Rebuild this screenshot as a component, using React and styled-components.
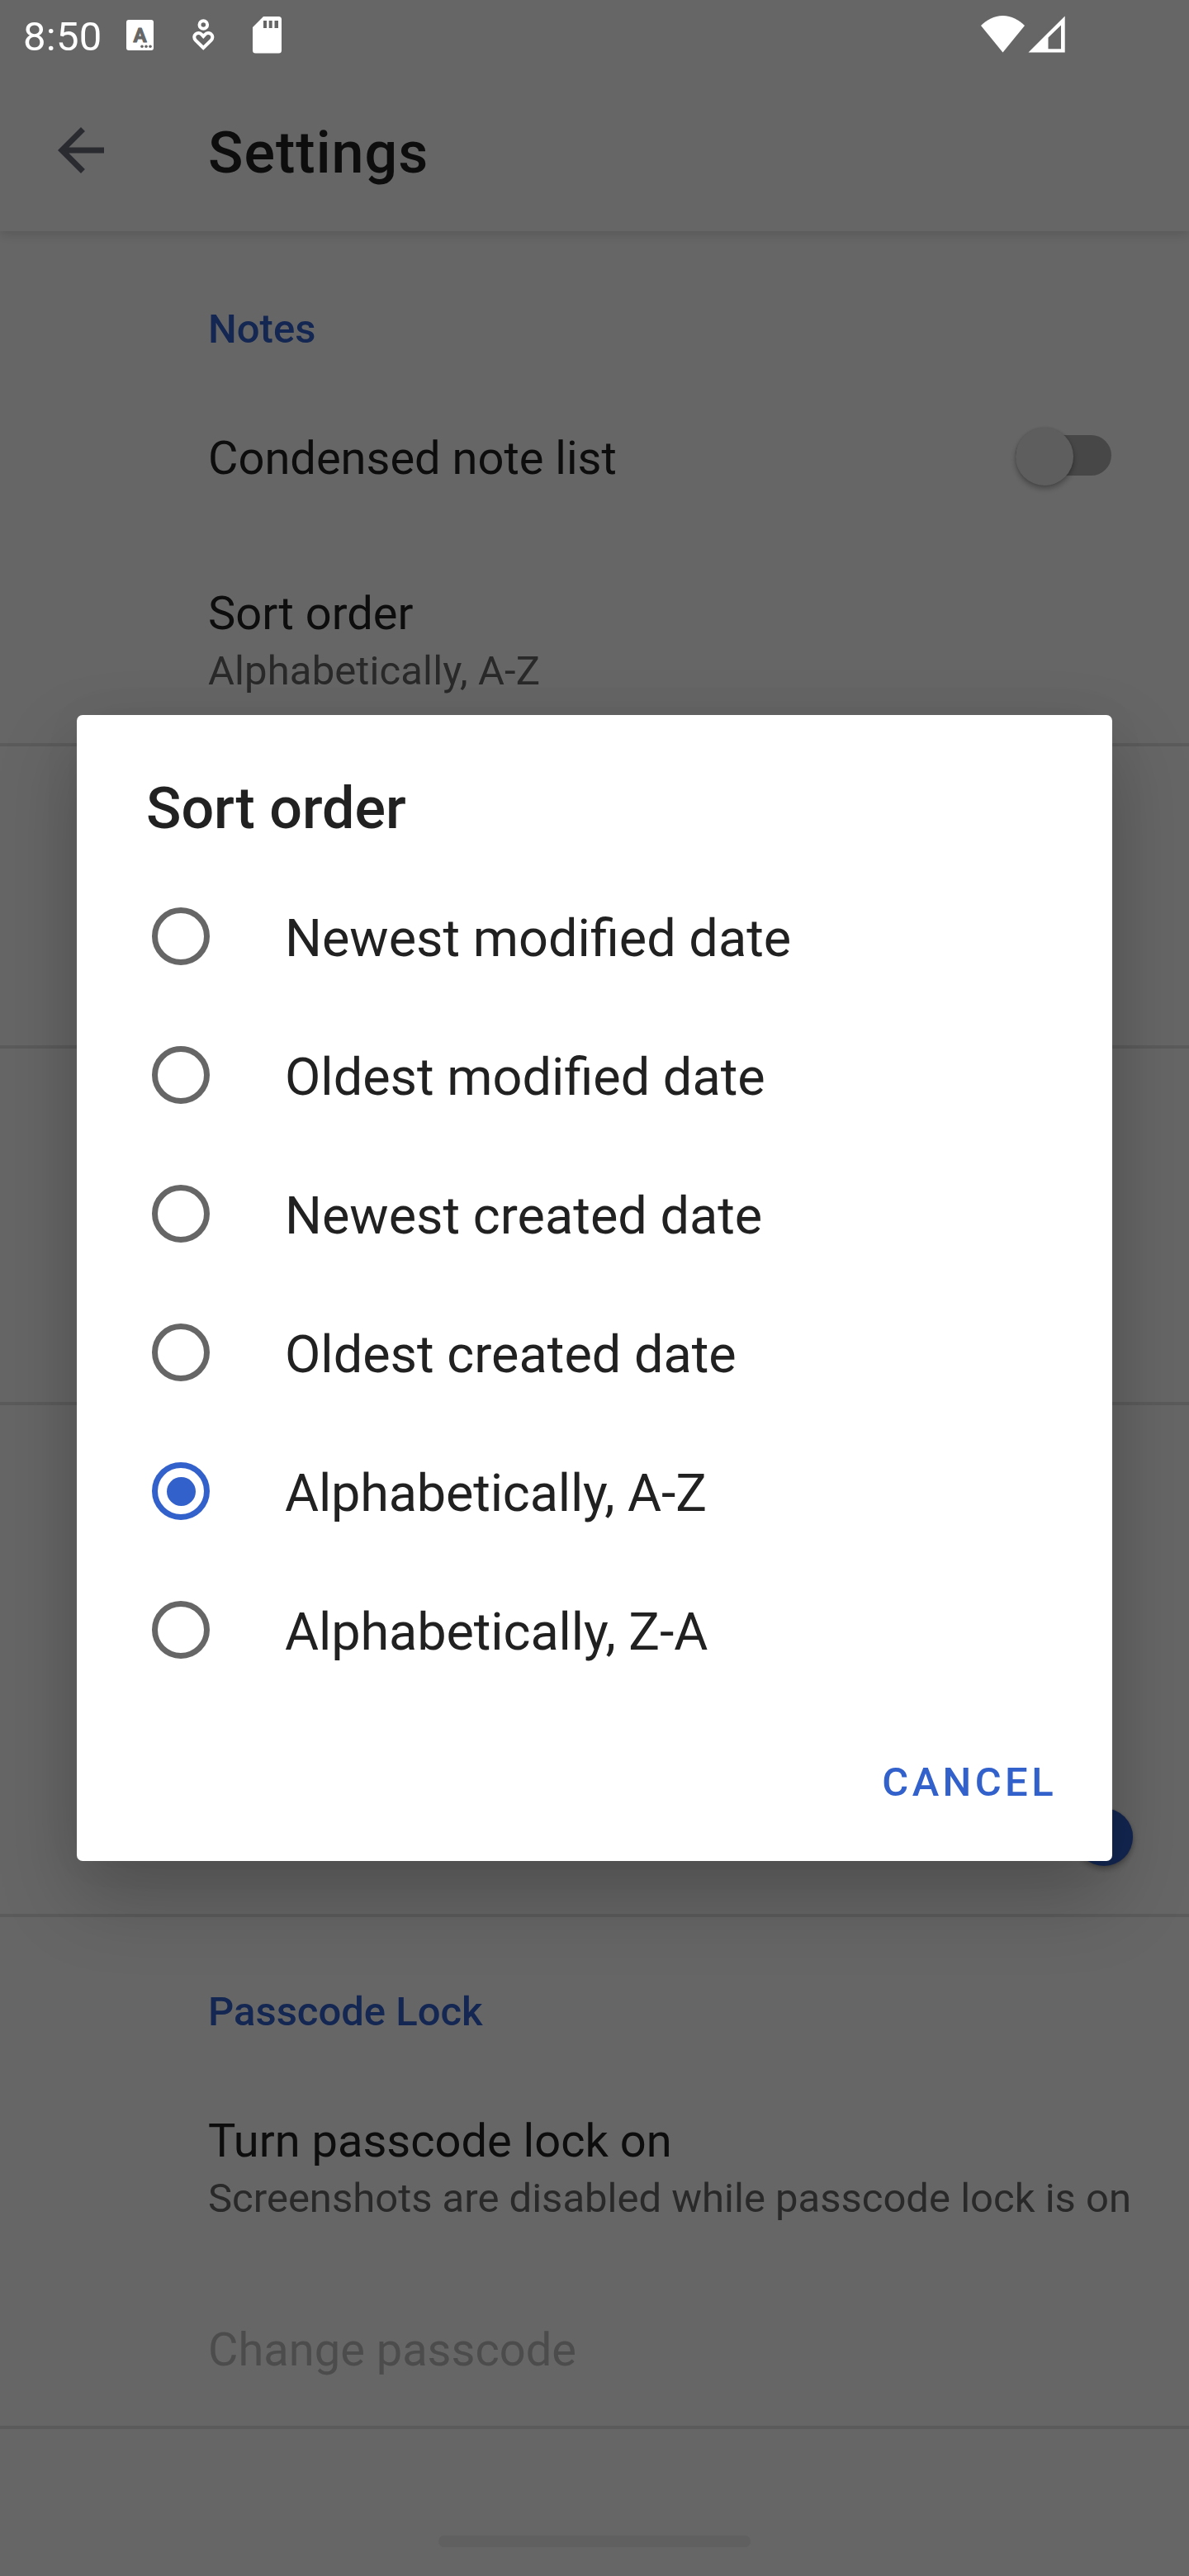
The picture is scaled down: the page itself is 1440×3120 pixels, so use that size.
import React, { useState } from "react";
import styled, { createGlobalStyle } from "styled-components";

const GlobalStyle = createGlobalStyle`
  html, body { margin: 0; padding: 0; background: #fff; }
  *, *::before, *::after { box-sizing: border-box; }
  button { font: inherit; border: 0; background: none; padding: 0; }
`;

const Screen = styled.div`
  position: relative;
  width: 1440px;
  height: 3120px;
  overflow: hidden;
  background: #fff;
  color: #212121;
  font-family: Roboto, "Liberation Sans", sans-serif;
`;

const Page = styled.div`
  display: flex;
  flex-direction: column;
  height: 100%;
  padding-top: 84px;
`;

const Toolbar = styled.header`
  display: flex;
  align-items: center;
  flex: none;
  height: 196px;
  padding-left: 56px;
  gap: 112px;
  background: #fff;
  box-shadow: 0 3px 14px rgba(0, 0, 0, 0.16);
  clip-path: inset(0 0 -30px 0);
  z-index: 1;
`;

const ToolbarTitle = styled.h1`
  margin: 0;
  padding-top: 6px;
  font-size: 70px;
  font-weight: 500;
  line-height: 84px;
  letter-spacing: 1.05px;
`;

const Section = styled.section`
  flex: none;
  display: flex;
  flex-direction: column;
  height: ${(p) => p.$height}px;
  padding-top: ${(p) => p.$top || 0}px;
  border-bottom: 4px solid #e3e3e3;
`;

const SectionTitle = styled.h2`
  margin: 0;
  padding: 73px 0 21px 252px;
  font-size: 49px;
  font-weight: 500;
  line-height: 84px;
  color: #3361cc;
`;

const Preference = styled.div`
  display: flex;
  align-items: center;
  justify-content: space-between;
  padding: 56px 94px ${(p) => p.$bottom}px 252px;
  color: ${(p) => (p.$disabled ? "#bebebe" : "#212121")};
`;

const Labels = styled.div`
  display: flex;
  flex-direction: column;
  white-space: nowrap;
`;

const Label = styled.span`
  font-size: 56px;
  line-height: 74px;
`;

const Summary = styled.span`
  font-size: 49px;
  line-height: 66px;
  letter-spacing: ${(p) => p.$spacing || 0}px;
  color: #666;
`;

const Track = styled.span`
  display: flex;
  align-items: center;
  justify-content: ${(p) => (p.$on ? "flex-end" : "flex-start")};
  width: 116px;
  height: 49px;
  margin-top: -7px;
  border-radius: 25px;
  background: ${(p) => (p.$on ? "#99b0e5" : "#b2b2b2")};
`;

const Thumb = styled.span`
  flex: none;
  width: 70px;
  height: 70px;
  margin-top: 2px;
  border-radius: 50%;
  background: ${(p) => (p.$on ? "#3361cc" : "#ececec")};
  box-shadow: 0 4px 7px rgba(0, 0, 0, 0.3), 0 0 3px rgba(0, 0, 0, 0.14);
`;

const BottomSwitchRow = styled.div`
  display: flex;
  justify-content: flex-end;
  margin-top: auto;
  padding: 0 68px 70px 0;
`;

const StatusBar = styled.div`
  position: absolute;
  inset: 0 0 auto 0;
  z-index: 3;
  display: flex;
  align-items: center;
  height: 84px;
  padding-left: 28px;
  color: #fff;
`;

const Clock = styled.span`
  width: 125px;
  padding-top: 6px;
  font-size: 49px;
  line-height: 84px;
  letter-spacing: 0.3px;
`;

const StatusIcons = styled.svg`
  flex: none;
  margin-left: ${(p) => p.$left || 0}px;
`;

const Scrim = styled.div`
  position: absolute;
  inset: 0;
  z-index: 2;
  display: flex;
  align-items: center;
  justify-content: center;
  background: rgba(0, 0, 0, 0.6);
`;

const Dialog = styled.div`
  display: flex;
  flex-direction: column;
  width: 1254px;
  height: 1388px;
  padding: 71px 0 33px;
  border-radius: 7px;
  background: #fff;
  box-shadow: 0 42px 96px rgba(0, 0, 0, 0.23), 0 0 60px rgba(0, 0, 0, 0.03);
`;

const DialogTitle = styled.h2`
  margin: 0 0 29px;
  padding-left: 84px;
  font-size: 70px;
  font-weight: 500;
  line-height: 84px;
`;

const Option = styled.label`
  display: flex;
  align-items: center;
  gap: 91px;
  height: 168px;
  padding-left: 91px;
`;

const Radio = styled.span`
  display: flex;
  align-items: center;
  justify-content: center;
  width: 70px;
  height: 70px;
  border: 7px solid ${(p) => (p.$checked ? "#3361cc" : "#666")};
  border-radius: 50%;

  &::after {
    content: "";
    width: 35px;
    height: 35px;
    border-radius: 50%;
    background: ${(p) => (p.$checked ? "#3361cc" : "transparent")};
  }
`;

const OptionText = styled.span`
  padding-top: 5px;
  font-size: 63px;
  line-height: 84px;
  letter-spacing: ${(p) => p.$spacing || 0}px;
`;

const Actions = styled.div`
  display: flex;
  justify-content: flex-end;
  margin-top: auto;
  padding-right: 67px;
`;

const CancelButton = styled.button`
  && {
    height: 126px;
    font-size: 49px;
    font-weight: 500;
    letter-spacing: 4.375px;
    color: #3361cc;
  }
`;

const NavHandle = styled.div`
  position: absolute;
  left: 531px;
  bottom: 35px;
  z-index: 3;
  width: 378px;
  height: 14px;
  border-radius: 7px;
  background: #606060;
`;

const options = [
  { name: "Newest modified date" },
  { name: "Oldest modified date" },
  { name: "Newest created date" },
  { name: "Oldest created date" },
  { name: "Alphabetically, A-Z", spacing: -0.18 },
  { name: "Alphabetically, Z-A", spacing: -0.1 },
];

function Switch({ on }) {
  return (
    <Track $on={on}>
      <Thumb $on={on} />
    </Track>
  );
}

function BackIcon() {
  return (
    <svg width="84" height="84" viewBox="0 0 24 24" fill="#696d78">
      <path d="M20 11H7.83l5.59-5.59L12 4l-8 8 8 8 1.41-1.41L7.83 13H20v-2z" />
    </svg>
  );
}

export default function App() {
  const [selected, setSelected] = useState("Alphabetically, A-Z");
  return (
    <Screen>
      <GlobalStyle />
      <Page>
        <Toolbar>
          <BackIcon />
          <ToolbarTitle>Settings</ToolbarTitle>
        </Toolbar>
        <Section $height={624} $top={4}>
          <SectionTitle>Notes</SectionTitle>
          <Preference $bottom={58}>
            <Labels>
              <Label>Condensed note list</Label>
            </Labels>
            <Switch />
          </Preference>
          <Preference $bottom={54}>
            <Labels>
              <Label>Sort order</Label>
              <Summary $spacing={0.12}>Alphabetically, A-Z</Summary>
            </Labels>
          </Preference>
        </Section>
        <Section $height={366} />
        <Section $height={432} />
        <Section $height={620}>
          <BottomSwitchRow>
            <Switch on />
          </BottomSwitchRow>
        </Section>
        <Section $height={620}>
          <SectionTitle>Passcode Lock</SectionTitle>
          <Preference $bottom={57}>
            <Labels>
              <Label>Turn passcode lock on</Label>
              <Summary>Screenshots are disabled while passcode lock is on</Summary>
            </Labels>
          </Preference>
          <Preference $bottom={55} $disabled>
            <Label>Change passcode</Label>
          </Preference>
        </Section>
      </Page>

      <Scrim>
        <Dialog role="dialog">
          <DialogTitle>Sort order</DialogTitle>
          {options.map(({ name, spacing }) => (
            <Option key={name} onClick={() => setSelected(name)}>
              <Radio $checked={name === selected} />
              <OptionText $spacing={spacing}>{name}</OptionText>
            </Option>
          ))}
          <Actions>
            <CancelButton>CANCEL</CancelButton>
          </Actions>
        </Dialog>
      </Scrim>

      <StatusBar>
        <Clock>8:50</Clock>
        <StatusIcons width="188" height="84" viewBox="153 0 188 84" fill="#fff">
          <rect x="153" y="24" width="33" height="37" rx="3" />
          <text x="169.600" y="50.500" textAnchor="middle" fontSize="24" fontWeight="700" fill="#666" stroke="#666" strokeWidth="1" strokeLinejoin="round">A</text>
          <g fill="#666">
            <circle cx="172" cy="56.3" r="1.8" />
            <circle cx="177" cy="56.3" r="1.8" />
            <circle cx="182" cy="56.3" r="1.8" />
          </g>
          <g fill="none" stroke="#fff" strokeWidth="4">
            <circle cx="246.3" cy="30" r="4.8" />
            <path d="M246.3 58 L237 48.9 C231.6 43 240 36.8 244.4 42 L246.3 44 L248.2 42 C252.6 36.8 261 43 255.6 48.9 Z" />
          </g>
          <path fillRule="evenodd" d="M319 20h18.500a3.500 3.500 0 0 1 3.500 3.500v37.500a3.500 3.500 0 0 1-3.500 3.500h-28a3.500 3.500 0 0 1-3.500-3.500V33zM319 25v9h4v-9zM325.700 25v9h4v-9zM332.500 25v9h4.500v-9z" />
        </StatusIcons>
        <StatusIcons $left={847} width="102" height="84" viewBox="1188 0 102 84" fill="#fff">
          <path d="M1214.500 63.500L1188 31C1195 24 1204 19 1214.500 19S1234 24 1241 31z" />
          <path fillRule="evenodd" d="M1245.500 63.500L1289.700 19.500v44zM1269.500 45.500v13.800h15.500V30.500z" />
        </StatusIcons>
      </StatusBar>
      <NavHandle />
    </Screen>
  );
}
